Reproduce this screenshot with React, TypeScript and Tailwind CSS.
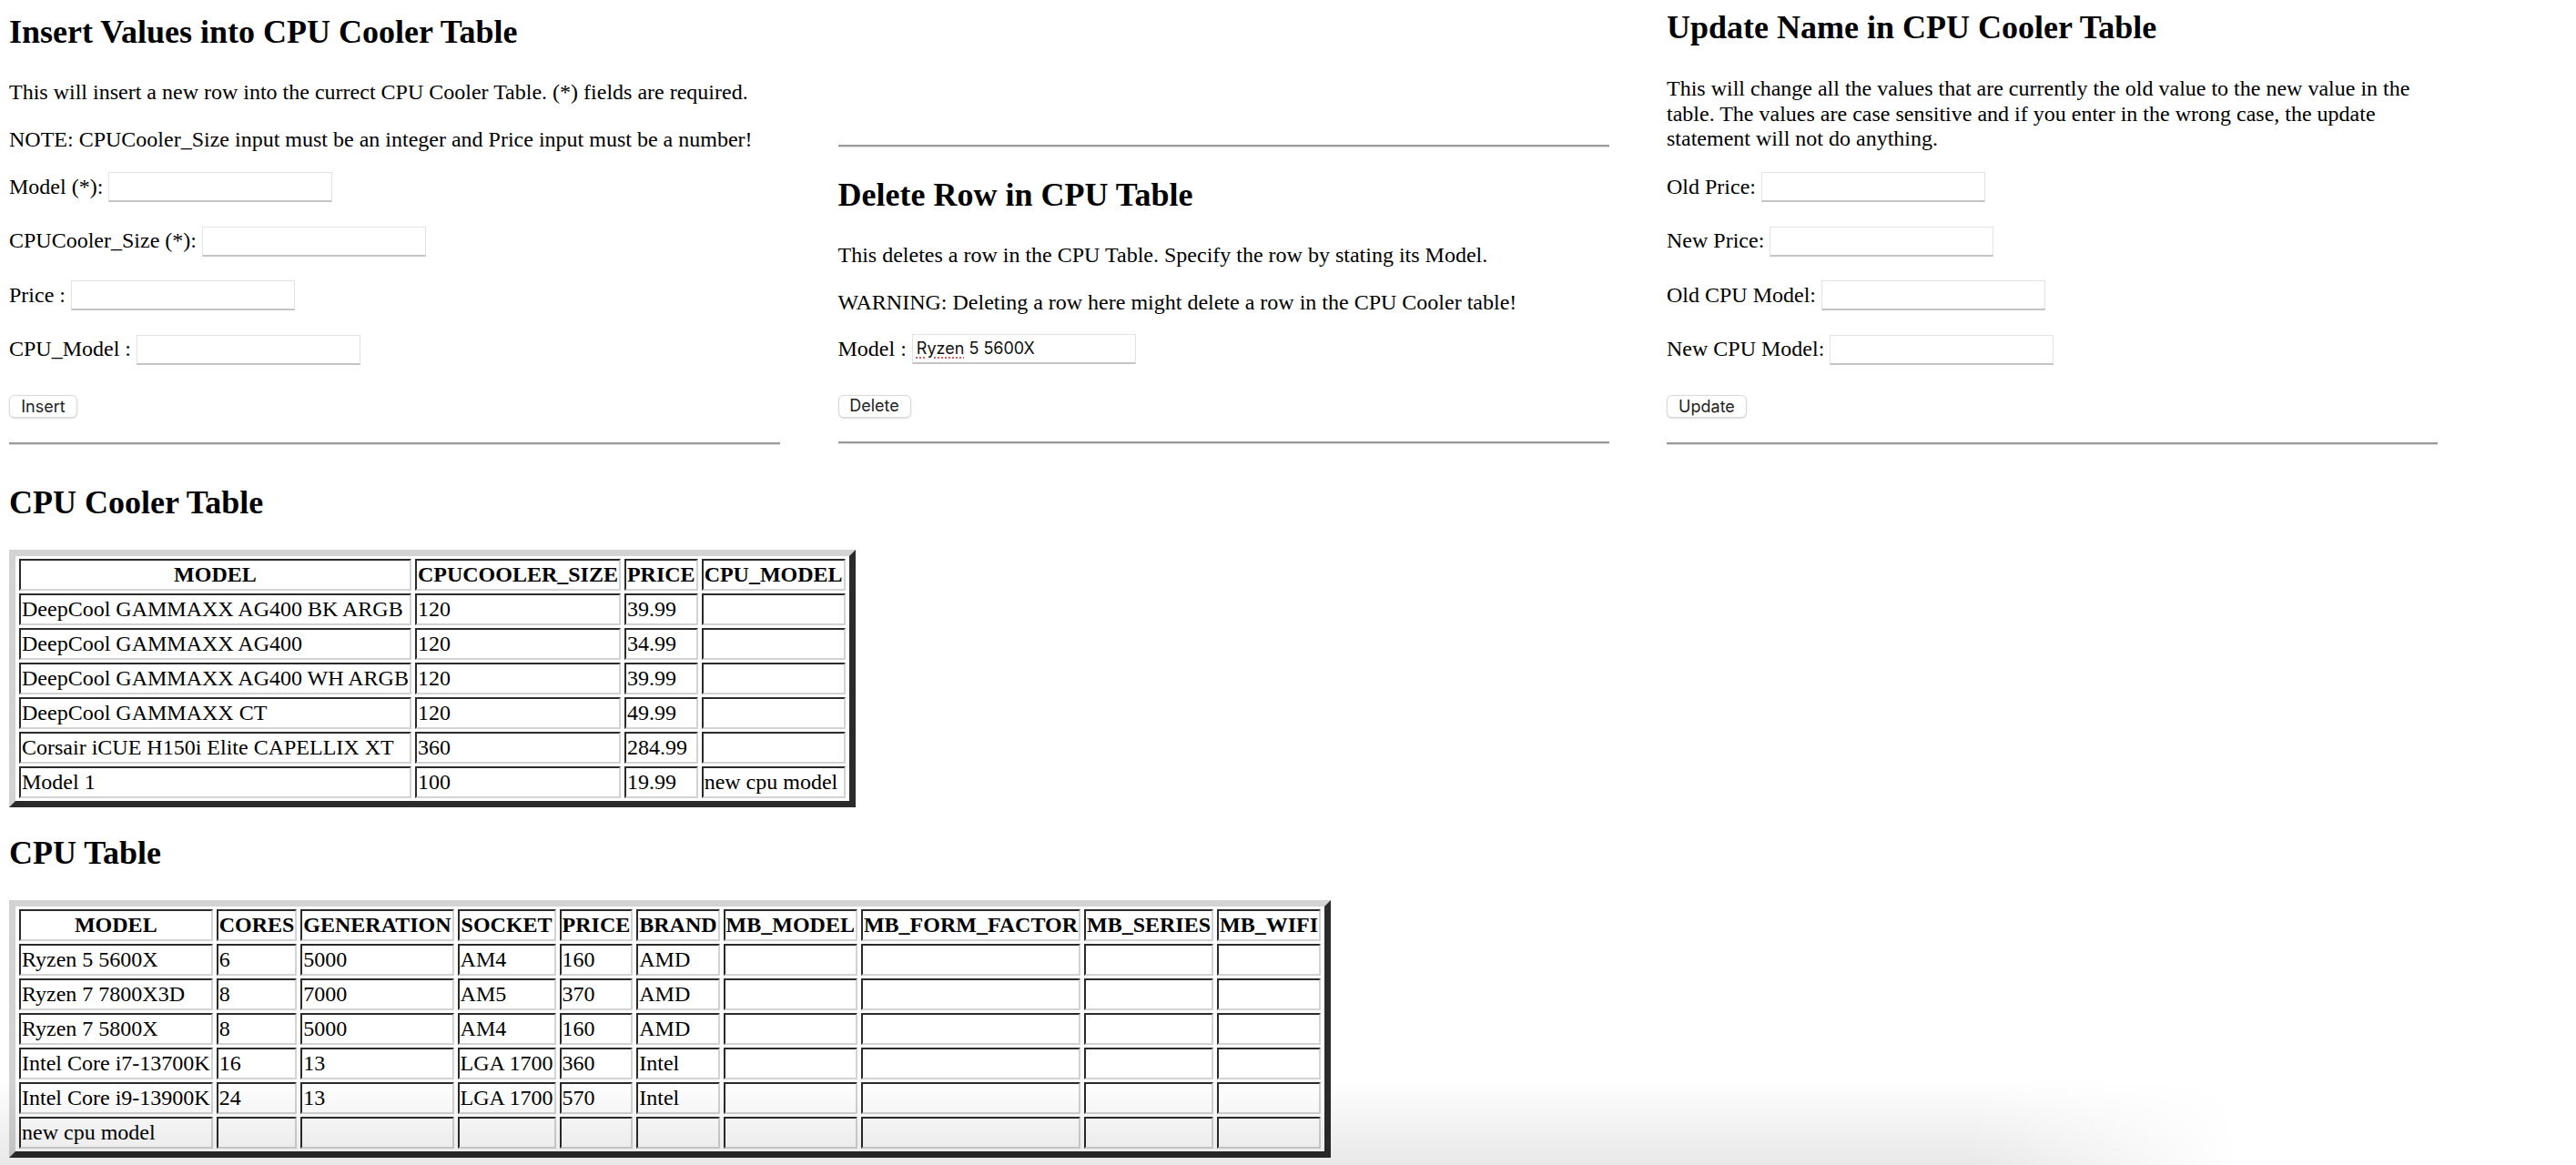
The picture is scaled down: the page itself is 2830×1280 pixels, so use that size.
import React from 'react';

const COOLERS = [
  ['DeepCool GAMMAXX AG400 BK ARGB', '120', '39.99', ''],
  ['DeepCool GAMMAXX AG400', '120', '34.99', ''],
  ['DeepCool GAMMAXX AG400 WH ARGB', '120', '39.99', ''],
  ['DeepCool GAMMAXX CT', '120', '49.99', ''],
  ['Corsair iCUE H150i Elite CAPELLIX XT', '360', '284.99', ''],
  ['Model 1', '100', '19.99', 'new cpu model'],
];

const CPU_COLS = ['MODEL', 'CORES', 'GENERATION', 'SOCKET', 'PRICE', 'BRAND', 'MB_MODEL', 'MB_FORM_FACTOR', 'MB_SERIES', 'MB_WIFI'];

const CPUS = [
  ['Ryzen 5 5600X', '6', '5000', 'AM4', '160', 'AMD', '', '', '', ''],
  ['Ryzen 7 7800X3D', '8', '7000', 'AM5', '370', 'AMD', '', '', '', ''],
  ['Ryzen 7 5800X', '8', '5000', 'AM4', '160', 'AMD', '', '', '', ''],
  ['Intel Core i7-13700K', '16', '13', 'LGA 1700', '360', 'Intel', '', '', '', ''],
  ['Intel Core i9-13900K', '24', '13', 'LGA 1700', '570', 'Intel', '', '', '', ''],
  ['new cpu model', '', '', '', '', '', '', '', '', ''],
];

function Rule() {
  return <hr className="w-[847px] h-0 border-0 border-t-2 border-b border-t-[#9a9a9a] border-b-[#dedede]" />;
}

function Field({ label, first }: { label: string; first?: boolean }) {
  return (
    <div className={`flex items-center gap-[6px] h-[33px] ${first ? '' : 'mt-[26.5px]'}`}>
      <span>{label}</span>
      <input
        type="text"
        className="w-[246px] h-[33px] bg-white border border-[#e3e3e3] border-b-2 border-b-[#c4c4c4] px-[5px] text-[18px] font-['Inter',sans-serif] outline-none"
      />
    </div>
  );
}

function Btn({ label, w }: { label: string; w: string }) {
  return (
    <button
      className={`${w} h-[25px] rounded-[6px] bg-white border border-[#dadada] shadow-[0_1px_2px_rgba(0,0,0,0.15)] text-[18px] leading-none text-[#222] font-['Inter',sans-serif]`}
    >
      {label}
    </button>
  );
}

const th = 'border-2 border-t-[#2b2b2b] border-l-[#2b2b2b] border-r-[#d3d3d3] border-b-[#d3d3d3] px-[1px] py-[1.5px] leading-[28px] font-bold text-center whitespace-nowrap';
const td = 'border-2 border-t-[#2b2b2b] border-l-[#2b2b2b] border-r-[#d3d3d3] border-b-[#d3d3d3] px-[1px] py-[1.5px] leading-[28px] text-left whitespace-nowrap';

function DataTable({ cols, rows }: { cols: string[]; rows: string[][] }) {
  return (
    <table className="border-separate border-spacing-x-[4px] border-spacing-y-[3px] border-[7px] border-t-[#d3d3d3] border-l-[#d3d3d3] border-r-[#2b2b2b] border-b-[#2b2b2b]">
      <thead>
        <tr>
          {cols.map(c => (
            <th key={c} className={th}>{c}</th>
          ))}
        </tr>
      </thead>
      <tbody>
        {rows.map((r, i) => (
          <tr key={i}>
            {r.map((v, j) => (
              <td key={j} className={td}>{v}</td>
            ))}
          </tr>
        ))}
      </tbody>
    </table>
  );
}

export default function App() {
  return (
    <div className="relative min-h-[1280px] bg-white text-black pl-[10px] font-['Liberation_Serif','Times_New_Roman',serif] text-[24px] leading-[27.6px]">
      {/* forms */}
      <div className="flex items-start gap-[63.5px]">
        {/* insert */}
        <div className="w-[847px] flex flex-col pt-[15px]">
          <h2 className="text-[36px] font-bold leading-[41px]">Insert Values into CPU Cooler Table</h2>
          <p className="mt-[32px]">This will insert a new row into the currect CPU Cooler Table. (*) fields are required.</p>
          <p className="mt-[24.4px]">NOTE: CPUCooler_Size input must be an integer and Price input must be a number!</p>
          <div className="mt-[21.5px]">
            <Field label="Model (*):" first />
            <Field label="CPUCooler_Size (*):" />
            <Field label="Price :" />
            <Field label="CPU_Model :" />
          </div>
          <div className="mt-[31px]">
            <Btn label="Insert" w="w-[75px]" />
          </div>
          <div className="mt-[26.5px]">
            <Rule />
          </div>
        </div>

        {/* delete */}
        <div className="w-[847px] flex flex-col pt-[159px]">
          <Rule />
          <h2 className="mt-[32px] text-[36px] font-bold leading-[41px]">Delete Row in CPU Table</h2>
          <p className="mt-[32px]">This deletes a row in the CPU Table. Specify the row by stating its Model.</p>
          <p className="mt-[24.4px]">WARNING: Deleting a row here might delete a row in the CPU Cooler table!</p>
          <div className="mt-[20.5px] flex items-center gap-[6px] h-[33px]">
            <span>Model :</span>
            <div className="w-[246px] h-[33px] bg-white border border-[#e3e3e3] border-b-2 border-b-[#c4c4c4] px-[4px] flex items-center text-[18px] leading-none text-[#111] font-['Inter',sans-serif]">
              <span className="underline decoration-dotted decoration-[#e06060] underline-offset-[4px]">Ryzen</span>
              <span className="whitespace-pre"> 5 5600X</span>
            </div>
          </div>
          <div className="mt-[31px]">
            <Btn label="Delete" w="w-[80px]" />
          </div>
          <div className="mt-[26.5px]">
            <Rule />
          </div>
        </div>

        {/* update */}
        <div className="w-[847px] flex flex-col pt-[10px]">
          <h2 className="text-[36px] font-bold leading-[41px]">Update Name in CPU Cooler Table</h2>
          <p className="mt-[33px] pr-[20px]">
            This will change all the values that are currently the old value to the new value in the table. The values are case sensitive and if you enter in the wrong case, the update statement will not do anything.
          </p>
          <div className="mt-[22.3px]">
            <Field label="Old Price:" first />
            <Field label="New Price:" />
            <Field label="Old CPU Model:" />
            <Field label="New CPU Model:" />
          </div>
          <div className="mt-[31px]">
            <Btn label="Update" w="w-[88px]" />
          </div>
          <div className="mt-[26.5px]">
            <Rule />
          </div>
        </div>
      </div>

      {/* tables */}
      <h2 className="mt-[43px] text-[36px] font-bold leading-[41px]">CPU Cooler Table</h2>
      <div className="mt-[31px]">
        <DataTable cols={['MODEL', 'CPUCOOLER_SIZE', 'PRICE', 'CPU_MODEL']} rows={COOLERS} />
      </div>

      <h2 className="mt-[30px] text-[36px] font-bold leading-[41px]">CPU Table</h2>
      <div className="mt-[31px]">
        <DataTable cols={CPU_COLS} rows={CPUS} />
      </div>

      {/* window shade at the bottom edge */}
      <div className="pointer-events-none fixed left-0 bottom-0 w-[2460px] h-[95px] bg-[linear-gradient(to_bottom,rgba(0,0,0,0),rgba(0,0,0,0.09))] [mask-image:linear-gradient(to_right,black_88%,transparent)]" />
    </div>
  );
}
